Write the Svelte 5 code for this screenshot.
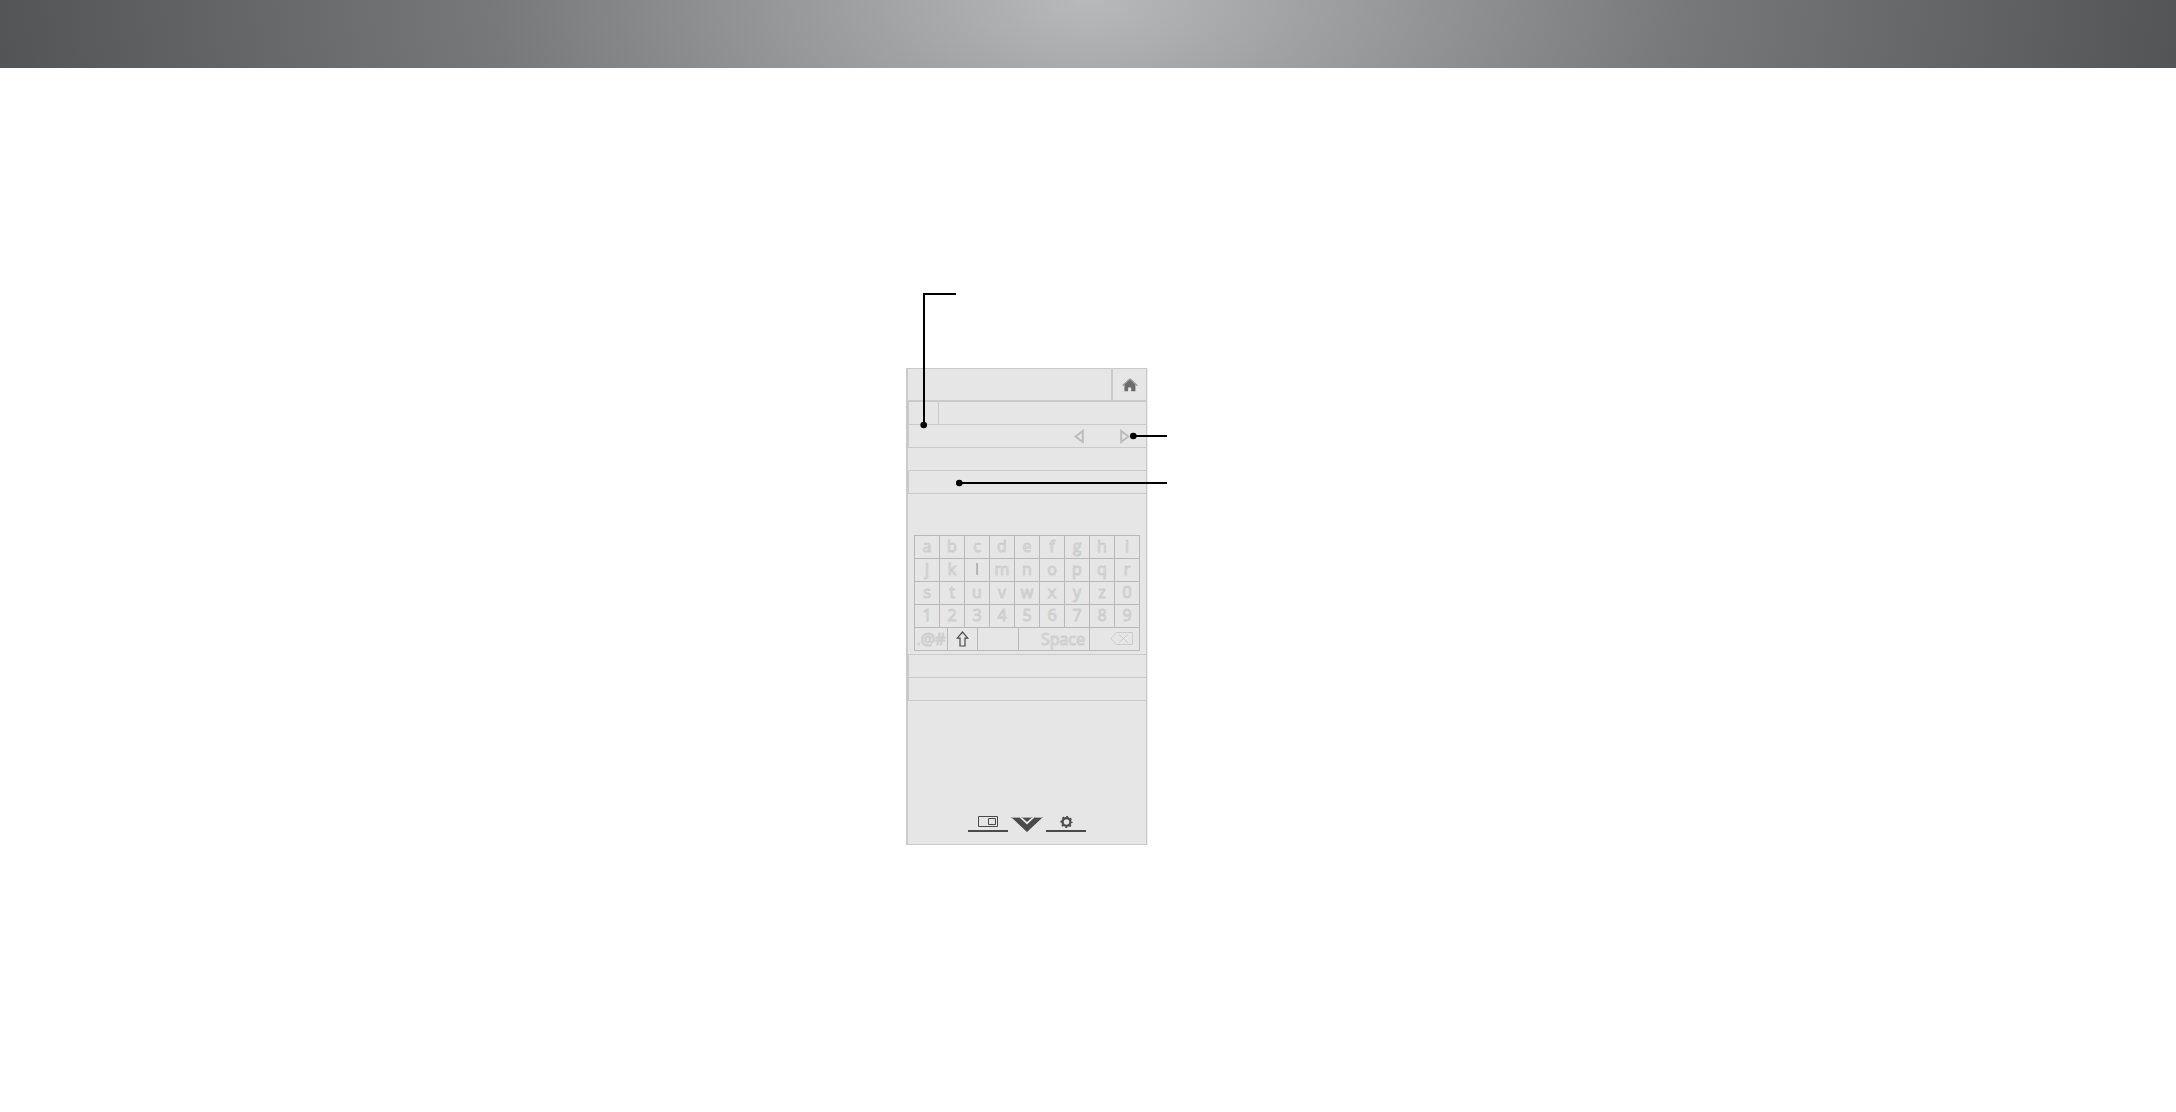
<script lang="ts">
  const rows = ['abcdefghi', 'jklmnopqr', 'stuvwxyz0', '123456789'].map((r) => r.split(''));

  let shift = $state(false);
  let tab = $state(0);
</script>

<header class="banner"></header>

<main>
  <div class="remote">
    <div class="top">
      <div class="title"></div>
      <button class="home" aria-label="Home">
        <svg width="16" height="14" viewBox="0 0 16 14">
          <path d="M8 1.6 2.4 6.4V13.2H6.1V9.6H9.2V13.2H13.4V6.4Z" fill="#6b6d6c" />
          <path d="M.7 7.6 7 1.6Q8 .5 9 1.6L15.3 7.6" fill="none" stroke="#8f9190" stroke-width="1.3" />
        </svg>
      </button>
    </div>

    <div class="row tabs">
      <button class="tab" aria-label="First tab" onclick={() => (tab = 0)}></button>
      <button class="tab wide" aria-label="Second tab" onclick={() => (tab = 1)}></button>
    </div>
    <div class="row picker">
      <button class="arrow" aria-label="Previous">
        <svg width="10" height="15" viewBox="0 0 10 15">
          <path d="M8.8 2V13L1.6 7.5Z" />
        </svg>
      </button>
      <button class="arrow" aria-label="Next">
        <svg width="10" height="15" viewBox="0 0 10 15">
          <path d="M1.2 2V13L8.4 7.5Z" />
        </svg>
      </button>
    </div>
    <div class="row plain"></div>
    <div class="row"></div>

    <div class="keyboard">
      {#each rows as row}
        <div class="keys">
          {#each row as key}
            <button class="key" class:solid={key === 'l'}>{key}</button>
          {/each}
        </div>
      {/each}
      <div class="keys bottom">
        <button class="key">.@#</button>
        <button class="key" aria-label="Shift" onclick={() => (shift = !shift)}>
          <svg width="13" height="16" viewBox="0 0 13 16">
            <path d="M6.5 1 1.2 7.2H4V15H9V7.2H11.8Z" fill="none" stroke="#4a4a4a" stroke-width="1.2" />
          </svg>
        </button>
        <button class="key" aria-label="Blank"></button>
        <button class="key space">Space</button>
        <button class="key erase" aria-label="Delete">
          <svg width="24" height="14" viewBox="0 0 24 14">
            <path d="M6.5 .5H22.5V12.5H6.5L.8 6.5Z" />
            <path d="M9 2.5 18 10.5M18 2.5 9 10.5" />
          </svg>
        </button>
      </div>
    </div>

    <div class="row first"></div>
    <div class="row"></div>

    <nav>
      <button class="dock" aria-label="Wide view">
        <svg width="20" height="11" viewBox="0 0 20 11">
          <path d="M.5 .5H19.5V10.5H.5ZM10.5 2.5H17.5V8.5H10.5Z" fill="none" stroke="#4a4a4a" />
        </svg>
      </button>
      <button class="logo" aria-label="Menu">
        <svg width="32" height="15" viewBox="0 0 32 15">
          <path d="M0 0H8L16 7.6 24 0H32L16 15Z" fill="#4a4a4a" />
          <path d="M10.5 0H21.5L16 5Z" fill="#4a4a4a" />
          <path d="M0 0H8L9 1H1ZM10.5 0H21.5L20.5 1H11.5ZM24 0H32L31 1H23Z" fill="#aaa" />
        </svg>
      </button>
      <button class="dock" aria-label="Settings">
        <svg width="13" height="13" viewBox="0 0 13 13">
          <circle cx="6.5" cy="6" r="3.9" fill="none" stroke="#4a4a4a" stroke-width="2.2" />
          <circle cx="6.5" cy="6" r="5.3" fill="none" stroke="#4a4a4a" stroke-width="1.6" stroke-dasharray="2 2.16" stroke-dashoffset="1" />
        </svg>
      </button>
    </nav>

    <svg class="callouts" width="262" height="200" viewBox="0 0 262 200" aria-hidden="true">
      <path d="M50 1H18V132M227 143H261M53 190H261" />
      <circle cx="17.7" cy="132" r="3.3" />
      <circle cx="227.3" cy="143" r="3.3" />
      <circle cx="53.3" cy="190" r="3.3" />
    </svg>
  </div>
</main>

<style>
  :global(body) {
    margin: 0;
    background: #fff;
  }

  .banner {
    height: 68px;
    background: radial-gradient(51% 560px at 50% 0, #b8b9bb 0, #77787a 54%, #525355 100%);
  }

  main {
    padding: 300px 0 64px calc(50% - 182px);
  }

  .remote {
    position: relative;
    display: flex;
    flex-direction: column;
    box-sizing: border-box;
    width: 241px;
    border: 1px solid #cacaca;
    border-left-width: 2px;
    background: #e6e6e6;
    box-shadow: 1px 0 #ececec;
    font-family: 'Open Sans', 'Noto Sans', sans-serif;
  }

  button {
    margin: 0;
    padding: 0;
    border: 0;
    background: none;
    font: inherit;
    cursor: pointer;
  }

  svg {
    display: block;
  }

  .top {
    display: flex;
    height: 31px;
    border-bottom: 2px solid #cacaca;
  }

  .title {
    flex: 1;
  }

  .home {
    display: flex;
    align-items: center;
    justify-content: center;
    width: 35px;
    border-left: 2px solid #cacaca;
  }

  .row {
    height: 22px;
    border-left: 1px solid #cacaca;
    border-bottom: 1px solid #cacaca;
  }

  .plain {
    border-left-color: transparent;
  }

  .first {
    border-top: 1px solid #cacaca;
  }

  .tabs {
    display: flex;
  }

  .tab {
    width: 30px;
    border-right: 1px solid #cacaca;
  }

  .wide {
    flex: 1;
    border-right: 0;
  }

  .picker {
    display: flex;
    align-items: center;
    justify-content: flex-end;
    gap: 36px;
    padding-right: 16px;
  }

  .arrow path {
    fill: none;
    stroke: #bcbcbc;
    stroke-width: 2;
  }

  .keyboard {
    margin: 41px 6px 3px;
    border: 1px solid #b9b9b9;
    border-width: 1px 0 0 1px;
  }

  .keys {
    display: grid;
    grid-template-columns: repeat(9, 1fr);
  }

  .bottom {
    grid-template-columns: 33fr 30fr 41fr 71fr 50fr;
  }

  .key {
    display: flex;
    align-items: center;
    justify-content: center;
    height: 23px;
    padding-bottom: 2px;
    border: 1px solid #b9b9b9;
    border-width: 0 1px 1px 0;
    color: #e6e6e6;
    font-size: 16px;
    line-height: 20px;
    -webkit-text-stroke: 1px #cecece;
  }

  .bottom .key {
    padding-bottom: 0;
  }

  .solid {
    color: #a0a0a0;
    -webkit-text-stroke: 0;
  }

  .space {
    justify-content: flex-end;
    padding-right: 4px;
  }

  .erase {
    justify-content: flex-end;
    padding-right: 5px;
  }

  .erase path {
    fill: none;
    stroke: #cbcbcb;
  }

  nav {
    display: flex;
    justify-content: center;
    gap: 3px;
    padding: 115px 0 12px;
  }

  .dock {
    display: flex;
    justify-content: center;
    width: 40px;
    height: 16px;
    border-bottom: 2px solid #4a4a4a;
  }

  .callouts {
    position: absolute;
    top: -76px;
    left: -2px;
    overflow: visible;
    pointer-events: none;
  }

  .callouts path {
    fill: none;
    stroke: #000;
    stroke-width: 2;
  }
</style>
